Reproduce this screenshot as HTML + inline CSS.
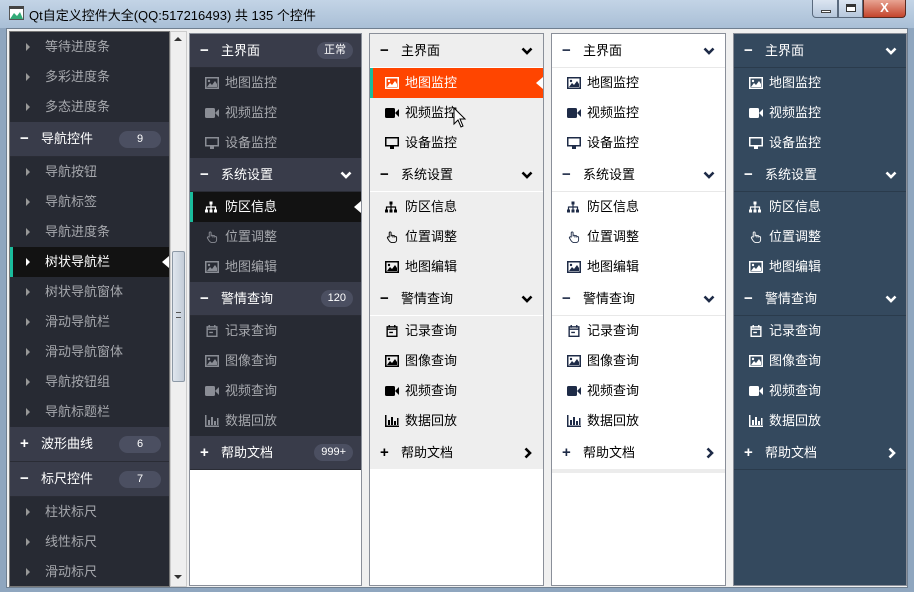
<!DOCTYPE html>
<html><head><meta charset="utf-8"><style>
*{margin:0;padding:0;box-sizing:border-box}
body{width:914px;height:592px;overflow:hidden;font-family:"Liberation Sans","Noto Sans CJK SC",sans-serif;font-size:13px;background:#8fa6bf;position:relative}
.title{position:absolute;left:0;top:0;width:914px;height:28px;background:linear-gradient(#c3d4e6,#a9bfd6);}
.title span{position:absolute;left:29px;top:5px;font-size:13px;color:#000}
.frame{position:absolute;left:6px;top:28px;width:902px;height:560px;background:#f0f0f0;border:1px solid #6f7f90}
.p{position:absolute;top:33px;height:553px;overflow:hidden;border:1px solid #8a8f99}
.r{position:relative;height:30px;line-height:30px;white-space:nowrap}
.h{height:34px;line-height:33px;border-bottom:1px solid}
.r svg{position:absolute;top:50%;transform:translateY(-50%)}
.t{position:absolute;top:0}
.b{position:absolute;right:8px;top:8px;height:17px;line-height:17px;border-radius:9px;font-size:11px;text-align:center;padding:0 8px}
.bar{position:absolute;left:0;top:0;width:3px;height:100%;background:#1abc9c}
.tri{position:absolute;right:0;top:9px;width:0;height:0;border-top:6px solid transparent;border-bottom:6px solid transparent;border-right:7px solid #fff}
</style></head><body>
<svg width="0" height="0" style="position:absolute"><defs>
<symbol id="img" viewBox="0 0 14 12"><rect x="0.75" y="0.75" width="12.5" height="10.5" fill="none" stroke="currentColor" stroke-width="1.5"/><path d="M2 10 L5 6 L7 8 L10 4 L12 7 V10Z" fill="currentColor"/><circle cx="4" cy="4" r="1.2" fill="currentColor"/></symbol>
<symbol id="vid" viewBox="0 0 14 10"><rect x="0" y="0" width="10" height="10" rx="1.5" fill="currentColor"/><path d="M10 5 L14 1 V9Z" fill="currentColor"/></symbol>
<symbol id="mon" viewBox="0 0 14 12"><rect x="0.75" y="0.75" width="12.5" height="8" fill="none" stroke="currentColor" stroke-width="1.5"/><rect x="5" y="9" width="4" height="3" fill="currentColor"/></symbol>
<symbol id="sit" viewBox="0 0 12 11"><rect x="4.5" y="0" width="3" height="3" fill="currentColor"/><path d="M6 3V5M1.5 5.5H10.5M1.5 5V8M6 5V8M10.5 5V8" stroke="currentColor" stroke-width="1.2" fill="none"/><rect x="0" y="8" width="3" height="3" fill="currentColor"/><rect x="4.5" y="8" width="3" height="3" fill="currentColor"/><rect x="9" y="8" width="3" height="3" fill="currentColor"/></symbol>
<symbol id="hand" viewBox="0 0 12 13"><path d="M3 7V2a1 1 0 0 1 2 0v4M5 5.5a1 1 0 0 1 2 0V7M7 6a1 1 0 0 1 2 0v1M9 7a1 1 0 0 1 2 0v2.5C11 11 10 12.5 8 12.5H6C4.5 12.5 3.5 11.5 2.5 10L1 7.5a1 1 0 0 1 2-.5" fill="none" stroke="currentColor" stroke-width="1"/></symbol>
<symbol id="cal" viewBox="0 0 12 13"><rect x="0.75" y="2" width="10.5" height="10.25" fill="none" stroke="currentColor" stroke-width="1.5"/><path d="M1 4.5H11M3 0V3M9 0V3M3 8H7" stroke="currentColor" stroke-width="1.5"/></symbol>
<symbol id="chart" viewBox="0 0 14 12"><path d="M0.75 0V11.25H14" fill="none" stroke="currentColor" stroke-width="1.5"/><path d="M3 5h2v5H3zM6 2h2v8H6zM9 6h2v4H9zM12 3h1.5v7H12z" fill="currentColor"/></symbol>
<symbol id="chev" viewBox="0 0 12 8"><path d="M1.5 1.5L6 6 10.5 1.5" fill="none" stroke="currentColor" stroke-width="2.6"/></symbol>
<symbol id="chr" viewBox="0 0 8 12"><path d="M1.5 1.5L6 6 1.5 10.5" fill="none" stroke="currentColor" stroke-width="2.6"/></symbol>
</defs></svg>

<div class="title"><svg style="position:absolute;left:9px;top:6px" width="15" height="14"><rect x="0.5" y="2.5" width="14" height="11" fill="#fff" stroke="#555"/><path d="M1 13L5 7 8 10 11 6 14 13Z" fill="#3a7"/><rect x="0" y="0" width="15" height="3" fill="#444"/></svg><span>Qt自定义控件大全(QQ:517216493) 共 135 个控件</span>
<div style="position:absolute;left:812px;top:0;width:26px;height:18px;background:linear-gradient(#dbe5f1,#b6c7dc);border:1px solid #5a6a7e;border-top:none;border-radius:0 0 0 4px"><div style="position:absolute;left:8px;top:10px;width:10px;height:3px;background:#fff;border:1px solid #444"></div></div>
<div style="position:absolute;left:838px;top:0;width:25px;height:18px;background:linear-gradient(#dbe5f1,#b6c7dc);border:1px solid #5a6a7e;border-top:none"><div style="position:absolute;left:7px;top:4px;width:10px;height:8px;border:1px solid #333;border-top:3px solid #333;background:#fff"></div></div>
<div style="position:absolute;left:863px;top:0;width:43px;height:18px;background:linear-gradient(#e8a493,#c4452c);border:1px solid #5a2a20;border-top:none;border-radius:0 0 4px 0;color:#fff;font-weight:bold;text-align:center;line-height:16px;font-size:13px">X</div>
</div>
<div class="frame"></div>

<div class="p" style="left:9px;top:31px;width:161px;height:556px;background:#272a33;color:#a6a8ad;border-color:#777">
<div id="L"></div>
</div>
<div style="position:absolute;left:170px;top:31px;width:17px;height:556px;background:#efefef;border:1px solid #ccc">
<div style="position:absolute;left:3px;top:5px;border-left:4px solid transparent;border-right:4px solid transparent;border-bottom:4px solid #333"></div>
<div style="position:absolute;left:1px;top:219px;width:13px;height:131px;background:linear-gradient(90deg,#dfe6ee,#c4cdd8);border:1px solid #8d99a6;border-radius:2px"><div style="position:absolute;left:3px;top:60px;width:5px;height:6px;border-top:1px solid #555;border-bottom:1px solid #555"></div></div>
<div style="position:absolute;left:3px;bottom:7px;border-left:4px solid transparent;border-right:4px solid transparent;border-top:4px solid #333"></div>
</div>

<div class="p" id="P1" style="left:189px;width:173px;background:#fff"></div>
<div class="p" id="P2" style="left:369px;width:175px;background:#fff"></div>
<div class="p" id="P3" style="left:551px;width:175px;background:#fff"></div>
<div class="p" id="P4" style="left:733px;width:174px;background:#34495e"></div>

<script>
function ico(id,x,c,w,h){w=w||14;h=h||12;return '<svg width="'+w+'" height="'+h+'" style="left:'+x+'px;color:'+c+'"><use href="#'+id+'"/></svg>';}
var L=[['i','等待进度条'],['i','多彩进度条'],['i','多态进度条'],['h','导航控件','9'],['i','导航按钮'],['i','导航标签'],['i','导航进度条'],['s','树状导航栏'],['i','树状导航窗体'],['i','滑动导航栏'],['i','滑动导航窗体'],['i','导航按钮组'],['i','导航标题栏'],['h','波形曲线','6','+'],['h','标尺控件','7'],['i','柱状标尺'],['i','线性标尺'],['i','滑动标尺']];
var s='';
L.forEach(function(r){
 if(r[0]=='h'){s+='<div class="r h" style="background:#393c4a;border-color:#2a2c35;color:#fff;height:35px;line-height:34px"><span class="t" style="left:10px;font-weight:bold;font-size:15px">'+(r[3]||'−')+'</span><span class="t" style="left:31px">'+r[1]+'</span><span class="b" style="background:#4b4f61;color:#fff;width:42px;top:9px">'+r[2]+'</span></div>';}
 else{var sel=r[0]=='s';s+='<div class="r" style="'+(sel?'background:#121212;color:#fff;':'')+'">'+(sel?'<div class="bar"></div><div class="tri"></div>':'')+'<span style="position:absolute;left:16px;top:11px;border-top:4px solid transparent;border-bottom:4px solid transparent;border-left:4px solid '+(sel?'#fff':'#999')+'"></span><span class="t" style="left:35px">'+r[1]+'</span></div>';}
});
document.getElementById('L').innerHTML=s;

var D=[['h','主界面'],['i','img','地图监控'],['i','vid','视频监控'],['i','mon','设备监控'],['h','系统设置'],['i','sit','防区信息'],['i','hand','位置调整'],['i','img','地图编辑'],['h','警情查询'],['i','cal','记录查询'],['i','img','图像查询'],['i','vid','视频查询'],['i','chart','数据回放'],['h','帮助文档','+']];
var T=[
 {hb:'#393c4a',hc:'#fff',hbd:'#2a2c35',ib:'#272a33',ic:'#a6a8ad',icon:'#8a8d95',sel:5,sb:'#121212',sc:'#fff',badge:['正常','','120','999+'],bb:'#4b4f61'},
 {hb:'#eeeeee',hc:'#000',hbd:'#fff',ib:'#eeeeee',ic:'#000',icon:'#000',sel:1,sb:'#ff4500',sc:'#fff',chev:'#000'},
 {hb:'#fff',hc:'#000',hbd:'#e8e8e8',ib:'#fff',ic:'#000',icon:'#1e2b47',chev:'#1e2b47',last:'#ececec',hic:'#1e2b47'},
 {hb:'#34495e',hc:'#fff',hbd:'#2a3b4c',ib:'#34495e',ic:'#fff',icon:'#fff',chev:'#fff'}
];
T.forEach(function(t,k){
 var s='',hi=0;
 D.forEach(function(r,n){
  if(r[0]=='h'){
   var last=n==D.length-1;
   s+='<div class="r h" style="background:'+t.hb+';color:'+t.hc+';border-color:'+(last&&t.last?t.last:t.hbd)+(last&&t.last?';border-bottom-width:4px;height:37px':'')+'">';
   s+='<span class="t" style="left:10px;font-weight:bold;font-size:15px;color:'+(t.hic||t.hc)+'">'+(r[2]?'+':'−')+'</span><span class="t" style="left:31px">'+r[1]+'</span>';
   if(t.badge){if(t.badge[hi])s+='<span class="b" style="background:'+t.bb+';color:#fff;padding:0 7px">'+t.badge[hi]+'</span>';else s+=ico('chev',150,'#fff',12,8);}
   else s+=last?ico('chr',154,t.chev,8,12):ico('chev',151,t.chev,12,8);
   s+='</div>';hi++;
  }else{
   var sel=t.sel==n;var c=sel?t.sc:t.ic;
   s+='<div class="r" style="background:'+(sel?t.sb:t.ib)+';color:'+c+'">'+(sel?'<div class="bar"></div><div class="tri"></div>':'')+ico(r[1],15,sel?t.sc:t.icon,r[1]=='sit'?12:14,r[1]=='vid'?10:12)+'<span class="t" style="left:35px">'+r[2]+'</span></div>';
  }
 });
 document.getElementById('P'+(k+1)).innerHTML=s;
});
</script>
<svg style="position:absolute;left:453px;top:107px" width="14" height="22" viewBox="0 0 14 22"><path d="M1 1V17L5 13 8 20 10 19 7 12H12Z" fill="#fff" stroke="#000" stroke-width="1"/></svg>
</body></html>
